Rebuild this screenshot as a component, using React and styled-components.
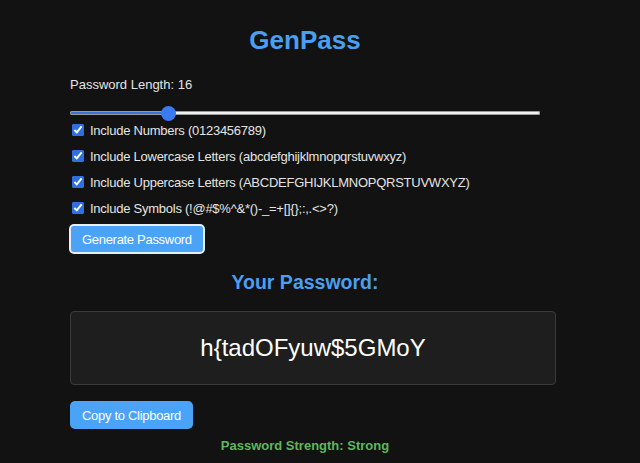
import React, { useState } from "react";
import styled, { createGlobalStyle } from "styled-components";

const Global = createGlobalStyle`
  html, body { margin: 0; padding: 0; background: #121212; }
  body { font-family: "Liberation Sans", Arial, sans-serif; color: #e6e6e6; }
`;

const Page = styled.div`
  width: 640px;
  height: 463px;
  background: #121212;
  overflow: hidden;
`;

const Container = styled.main`
  width: 470px;
  margin-left: 70px;
  padding-top: 25px;
  display: flex;
  flex-direction: column;
`;

const Title = styled.h1`
  margin: 0;
  font-size: 26px;
  line-height: 30px;
  font-weight: 700;
  color: #4a9ff0;
  text-align: center;
`;

const LengthLabel = styled.label`
  margin-top: 22px;
  font-size: 13px;
  line-height: 16px;
  color: #e4e4e4;
`;

const Range = styled.input`
  -webkit-appearance: none;
  appearance: none;
  margin: 12px 0 0 0;
  width: 470px;
  height: 16px;
  background: transparent;
  &::-webkit-slider-runnable-track {
    height: 4px;
    border-radius: 2px;
    background: linear-gradient(
      to right,
      #3a72dc 0%,
      #3a72dc ${(p) => p.$pct}%,
      #f2f2f2 ${(p) => p.$pct}%,
      #f2f2f2 100%
    );
    box-shadow: inset 0 0 0 1px #9a9a9a;
  }
  &::-webkit-slider-thumb {
    -webkit-appearance: none;
    width: 15px;
    height: 15px;
    margin-top: -5.5px;
    border-radius: 50%;
    background: #3a7bf0;
    border: none;
  }
`;

const Options = styled.div`
  display: flex;
  flex-direction: column;
  gap: 10px;
  margin-top: 1px;
`;

const OptionRow = styled.label`
  display: flex;
  align-items: center;
  height: 16px;
  font-size: 13px;
  letter-spacing: -0.25px;
  color: #e4e4e4;
  white-space: nowrap;
`;

const Check = styled.input`
  width: 12px;
  height: 12px;
  margin: 0 6px 0 2px;
  accent-color: #2f6fe0;
`;

const Button = styled.button`
  align-self: flex-start;
  font-family: "Liberation Sans", Arial, sans-serif;
  font-size: 13px;
  letter-spacing: -0.3px;
  color: #ffffff;
  background: #4aa3f6;
  border-radius: 5px;
  cursor: pointer;
  height: ${(p) => (p.$focused ? "30px" : "28px")};
  padding: 0 ${(p) => (p.$focused ? "11px" : "12px")};
  border: ${(p) => (p.$focused ? "2px solid #e6eef8" : "none")};
  margin-top: ${(p) => p.$mt}px;
  margin-left: ${(p) => (p.$focused ? "-1px" : "0")};
`;

const SubTitle = styled.h2`
  margin: 17px 0 0 0;
  font-size: 19.5px;
  line-height: 22px;
  font-weight: 700;
  color: #4a9ff0;
  text-align: center;
`;

const PasswordBox = styled.div`
  margin-top: 18px;
  width: 486px;
  height: 74px;
  box-sizing: border-box;
  border: 1px solid #3a3a3a;
  border-radius: 4px;
  background: #1e1e1e;
  display: flex;
  align-items: center;
  justify-content: center;
  font-size: 24px;
  color: #ffffff;
`;

const Strength = styled.p`
  margin: 9px 0 0 0;
  font-size: 13px;
  line-height: 16px;
  font-weight: 700;
  color: #5cb85c;
  text-align: center;
`;

const options = [
  "Include Numbers (0123456789)",
  "Include Lowercase Letters (abcdefghijklmnopqrstuvwxyz)",
  "Include Uppercase Letters (ABCDEFGHIJKLMNOPQRSTUVWXYZ)",
  "Include Symbols (!@#$%^&*()-_=+[]{};:,.<>?)",
];

export default function App() {
  const [len, setLen] = useState(16);
  const min = 8;
  const max = 48;
  const pct = ((len - min) / (max - min)) * 100;
  return (
    <Page>
      <Global />
      <Container>
        <Title>GenPass</Title>
        <LengthLabel>Password Length: {len}</LengthLabel>
        <Range
          type="range"
          min={min}
          max={max}
          value={len}
          $pct={pct}
          onChange={(e) => setLen(Number(e.target.value))}
        />
        <Options>
          {options.map((o) => (
            <OptionRow key={o}>
              <Check type="checkbox" defaultChecked />
              {o}
            </OptionRow>
          ))}
        </Options>
        <Button $focused $mt={8}>Generate Password</Button>
        <SubTitle>Your Password:</SubTitle>
        <PasswordBox>h{"{"}tadOFyuw$5GMoY</PasswordBox>
        <Button $mt={16}>Copy to Clipboard</Button>
        <Strength>Password Strength: Strong</Strength>
      </Container>
    </Page>
  );
}
